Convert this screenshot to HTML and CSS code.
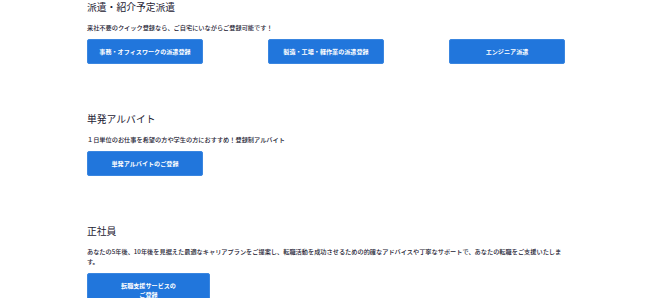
FILE: index.html
```html
<!DOCTYPE html>
<html lang="ja">
<head>
  <meta charset="UTF-8">
  <meta name="viewport" content="width=device-width, initial-scale=1.0">
  <title>ご登録</title>
  <link rel="stylesheet" href="styles.css">
</head>
<body>
  <div class="entry">
    <section class="entry-section">
      <h2 class="entry-title">派遣・紹介予定派遣</h2>
      <p class="entry-text">来社不要のクイック登録なら、ご自宅にいながらご登録可能です！</p>
      <div class="entry-buttons entry-buttons_spread">
        <a class="entry-btn" href="#">事務・オフィスワークの派遣登録</a>
        <a class="entry-btn" href="#">製造・工場・軽作業の派遣登録</a>
        <a class="entry-btn" href="#">エンジニア派遣</a>
      </div>
    </section>

    <section class="entry-section">
      <h2 class="entry-title">単発アルバイト</h2>
      <p class="entry-text">１日単位のお仕事を希望の方や学生の方におすすめ！登録制アルバイト</p>
      <div class="entry-buttons">
        <a class="entry-btn" href="#">単発アルバイトのご登録</a>
      </div>
    </section>

    <section class="entry-section">
      <h2 class="entry-title">正社員</h2>
      <p class="entry-text">あなたの5年後、10年後を見据えた最適なキャリアプランをご提案し、転職活動を成功させるための的確なアドバイスや丁寧なサポートで、あなたの転職をご支援いたします。</p>
      <div class="entry-buttons">
        <a class="entry-btn entry-btn_wide" href="#">転職支援サービスの<br>ご登録</a>
      </div>
    </section>
  </div>
</body>
</html>
```

FILE: styles.css
```css
* {
  margin: 0;
  padding: 0;
  box-sizing: border-box;
}

body {
  background-color: #fff;
  font-family: "Noto Sans CJK JP", "Noto Sans", sans-serif;
  color: #1d2233;
}

.entry {
  width: 478px;
  margin-left: 87px;
}

.entry-section {
  margin-bottom: 48px;
}

.entry-title {
  font-size: 9.8px;
  font-weight: 400;
  line-height: 14px;
  margin-bottom: 9px;
}

.entry-text {
  font-size: 6.2px;
  font-weight: 500;
  line-height: 10px;
  margin-bottom: 6px;
}

.entry-buttons {
  display: flex;
}

.entry-buttons_spread {
  justify-content: space-between;
}

/* 枠線込みで高さ25px */
.entry-btn {
  display: block;
  width: 116px;
  padding: 7px 0;
  font-size: 6.1px;
  font-weight: 700;
  line-height: 9px;
  text-align: center;
  color: #fff;
  text-decoration: none;
  background-color: #2176dc;
  border: 1px solid #3a86e0;
  border-radius: 2px;
}

.entry-btn_wide {
  width: 123px;
}
```
